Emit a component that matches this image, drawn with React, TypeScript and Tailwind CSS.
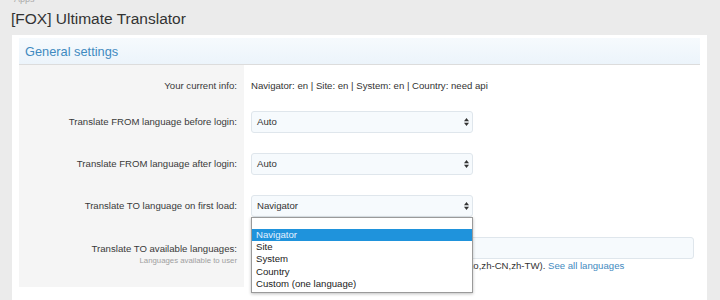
import React from 'react';

const font = { fontFamily: '"Liberation Sans", Arial, sans-serif' };

const Arrows: React.FC = () => (
    <svg width="5" height="8" viewBox="0 0 5 8" className="shrink-0">
        <path d="M2.5 0 L5 3.2 L0 3.2 Z" fill="#333" />
        <path d="M2.5 8 L5 4.8 L0 4.8 Z" fill="#333" />
    </svg>
);

const FakeSelect: React.FC<{ value: string }> = ({ value }) => (
    <div className="w-[222px] h-[22px] border border-[#dfe6ec] bg-[#f6fafd] rounded-[3px] flex items-center justify-between pl-[5px] pr-[3px] text-[9.6px] text-[#333]">
        <span>{value}</span>
        <Arrows />
    </div>
);

const Label: React.FC<{ children: React.ReactNode; className?: string }> = ({ children, className }) => (
    <div className={`w-[225px] shrink-0 bg-[#f5f5f5] flex flex-col items-end justify-center pr-[7px] text-[9.6px] text-[#3a3a3a] ${className ?? ''}`}>
        {children}
    </div>
);

const options = ['Navigator', 'Site', 'System', 'Country', 'Custom (one language)'];

const App: React.FC = () => {
    return (
        <div className="w-[720px] h-[300px] overflow-hidden bg-[#ebebeb]" style={font}>
            {/* breadcrumb, cut off at the top */}
            <div className="h-[4px] overflow-hidden pl-[14px]">
                <div className="text-[9px] leading-[9px] text-[#aaa] -mt-[5px]">Apps</div>
            </div>

            <h1 className="pl-[11px] pt-[5px] text-[15.5px] leading-[19px] text-[#333]">[FOX] Ultimate Translator</h1>

            <div className="ml-[12px] mt-[7px] w-[695px] bg-white px-[7px] pt-[3px] h-[300px]">
                <div className="h-[27px] flex items-center pl-[6px] pt-[2px] border-b border-[#dcdcdc] bg-gradient-to-b from-[#f6fafd] to-[#ecf4fb] text-[12.8px] text-[#3f8ac0]">
                    General settings
                </div>

                <div className="flex flex-col">
                    <div className="flex">
                        <Label className="pt-[13px] pb-[7px] leading-[16px]">Your current info:</Label>
                        <div className="pl-[7px] pt-[13px] pb-[7px] leading-[16px] text-[9.6px] text-[#333]">
                            Navigator: en | Site: en | System: en | Country: need api
                        </div>
                    </div>

                    <div className="flex h-[42px]">
                        <Label>Translate FROM language before login:</Label>
                        <div className="pl-[7px] flex items-center">
                            <FakeSelect value="Auto" />
                        </div>
                    </div>

                    <div className="flex h-[42px]">
                        <Label>Translate FROM language after login:</Label>
                        <div className="pl-[7px] flex items-center">
                            <FakeSelect value="Auto" />
                        </div>
                    </div>

                    <div className="flex h-[42px]">
                        <Label>Translate TO language on first load:</Label>
                        <div className="pl-[7px] flex items-center relative">
                            <FakeSelect value="Navigator" />
                            <div className="absolute left-[7px] top-[32px] w-[222px] z-10 bg-white border border-[#9a9a9a] shadow-[0_1px_3px_rgba(0,0,0,0.25)] text-[9.6px] leading-[12.2px] text-[#222] pb-[2px]">
                                <div className="h-[11px]" />
                                {options.map((o, i) => (
                                    <div
                                        key={o}
                                        className={`pl-[4px] ${i === 0 ? 'bg-[#1f93dc] text-[#e3f1ff]' : ''}`}
                                    >
                                        {o}
                                    </div>
                                ))}
                            </div>
                        </div>
                    </div>

                    <div className="flex h-[60px]">
                        <Label className="justify-start pt-[15px]">
                            <div className="leading-[13px]">Translate TO available languages:</div>
                            <div className="text-[7.8px] leading-[12px] text-[#a0a0a0]">Languages available to user</div>
                        </Label>
                        <div className="pl-[7px] pt-[10px] flex flex-col">
                            <div className="w-[443px] h-[22px] border border-[#dfe6ec] bg-[#f6fafd] rounded-[3px]" />
                            <div className="text-[9.6px] leading-[14px] text-[#333] whitespace-nowrap">
                                Separated by comma, empty for all (ex: en,de,es,fr,ko,zh-CN,zh-TW).{' '}
                                <span className="text-[#3f8ac0]">See all languages</span>
                            </div>
                        </div>
                    </div>
                </div>
            </div>
        </div>
    );
};

export default App;
